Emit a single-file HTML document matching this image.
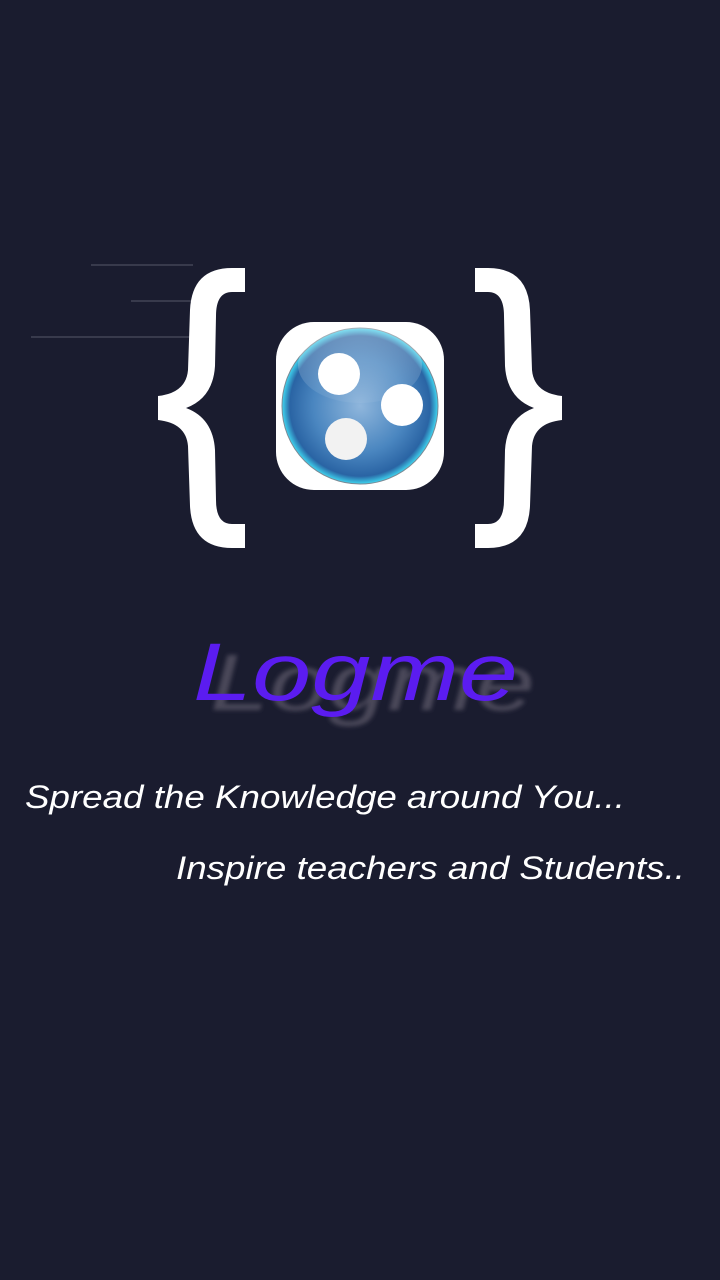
<!DOCTYPE html>
<html><head><meta charset="utf-8"><style>
html,body{margin:0;padding:0;background:#1a1c2f;width:720px;height:1280px;overflow:hidden}
</style></head><body>
<svg width="720" height="1280" viewBox="0 0 720 1280" xmlns="http://www.w3.org/2000/svg">
<defs>
<radialGradient id="sph" cx="50%" cy="50%" r="50%">
<stop offset="0" stop-color="#8fb6dc"/>
<stop offset="0.6" stop-color="#4a86c0"/>
<stop offset="0.9" stop-color="#2a64a4"/>
<stop offset="1" stop-color="#3fd6f0"/>
</radialGradient>
<linearGradient id="gl" x1="0" y1="0" x2="0" y2="1">
<stop offset="0" stop-color="#fff" stop-opacity="0.35"/>
<stop offset="1" stop-color="#fff" stop-opacity="0.05"/>
</linearGradient>
<filter id="bl"><feGaussianBlur stdDeviation="2"/></filter>
<path id="br" d="M245 268 L232 268 Q192 268 190 310 L188 370 Q186 393 158 396 L158 420 Q186 423 188 446 L190 506 Q192 548 232 548 L245 548 L245 524 L232 524 Q216 524 216 500 L215 450 Q213 418 186 408 Q213 398 215 366 L216 316 Q216 292 232 292 L245 292 Z" fill="#fff"/>
</defs>
<line x1="91" y1="265" x2="193" y2="265" stroke="#555868" stroke-width="1"/>
<line x1="131" y1="301" x2="193" y2="301" stroke="#555868" stroke-width="1"/>
<line x1="31" y1="337" x2="193" y2="337" stroke="#555868" stroke-width="1"/>
<use href="#br"/>
<use href="#br" transform="translate(720,0) scale(-1,1)"/>
<rect x="276" y="322" width="168" height="168" rx="38" fill="#fff"/>
<circle cx="360" cy="406" r="78" fill="url(#sph)" stroke="#7a8a96" stroke-width="1"/>
<ellipse cx="360" cy="365" rx="62" ry="38" fill="url(#gl)"/>
<circle cx="339" cy="374" r="21" fill="#fff"/>
<circle cx="402" cy="405" r="21" fill="#fff"/>
<circle cx="346" cy="439" r="21" fill="#f2f2f2"/>
<text x="210" y="710" font-family="Liberation Sans, sans-serif" font-style="italic" font-size="80" fill="#4a4658" textLength="325" lengthAdjust="spacingAndGlyphs" filter="url(#bl)">Logme</text>
<text x="193" y="700" font-family="Liberation Sans, sans-serif" font-style="italic" font-size="82" fill="#5b1cf0" textLength="325" lengthAdjust="spacingAndGlyphs">Logme</text>
<text x="25" y="808" font-family="Liberation Sans, sans-serif" font-style="italic" font-size="32" fill="#fff" textLength="600" lengthAdjust="spacingAndGlyphs">Spread the Knowledge around You...</text>
<text x="176" y="879" font-family="Liberation Sans, sans-serif" font-style="italic" font-size="32" fill="#fff" textLength="509" lengthAdjust="spacingAndGlyphs">Inspire teachers and Students..</text>
</svg>
</body></html>
